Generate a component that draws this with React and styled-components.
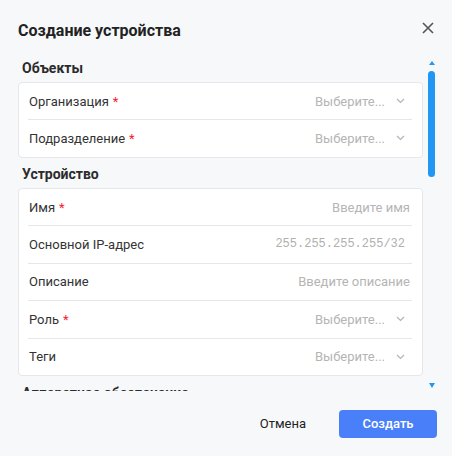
import styled, { createGlobalStyle } from "styled-components";

const GlobalStyle = createGlobalStyle`
  * {
    box-sizing: border-box;
  }
  body {
    margin: 0;
    background: #f7f8fa;
    font-family: Roboto, "Liberation Sans", Arial, sans-serif;
    color: #333;
  }
`;

const sections = [
  {
    title: "Объекты",
    rows: [
      { label: "Организация", required: true, kind: "select", hint: "Выберите..." },
      { label: "Подразделение", required: true, kind: "select", hint: "Выберите..." },
    ],
  },
  {
    title: "Устройство",
    rows: [
      { label: "Имя", required: true, kind: "input", hint: "Введите имя" },
      { label: "Основной IP-адрес", kind: "ip", hint: "255.255.255.255/32" },
      { label: "Описание", kind: "input", hint: "Введите описание" },
      { label: "Роль", required: true, kind: "select", hint: "Выберите..." },
      { label: "Теги", kind: "select", hint: "Выберите..." },
    ],
  },
  {
    title: "Аппаратное обеспечение",
    rows: [
      { label: "Производитель", kind: "select", hint: "Выберите..." },
      { label: "Модель", kind: "input", hint: "Введите модель" },
    ],
  },
];

function Chevron() {
  return (
    <svg width="9" height="6" viewBox="0 0 9 6" fill="none">
      <path d="M1 1l3.5 3.5L8 1" stroke="#b4b4b4" strokeWidth="1.2" />
    </svg>
  );
}

function CloseIcon() {
  return (
    <svg width="12" height="12" viewBox="0 0 12 12" fill="none">
      <path d="M1 1l10 10M11 1L1 11" stroke="#555" strokeWidth="1.6" />
    </svg>
  );
}

function FieldRow({ label, required, kind, hint }) {
  return (
    <Row>
      <Label>
        {label}
        {required && <Star>*</Star>}
      </Label>
      {kind === "select" && (
        <Select>
          <Placeholder>{hint}</Placeholder>
          <Chevron />
        </Select>
      )}
      {kind === "input" && <Placeholder>{hint}</Placeholder>}
      {kind === "ip" && <IpHint>{hint}</IpHint>}
    </Row>
  );
}

export default function App() {
  return (
    <>
      <GlobalStyle />
      <Modal>
        <Header>
          <Title>Создание устройства</Title>
          <CloseButton aria-label="Закрыть">
            <CloseIcon />
          </CloseButton>
        </Header>
        <Body>
          <Scroll>
            {sections.map((s) => (
              <Section key={s.title}>
                <SectionTitle>{s.title}</SectionTitle>
                <Card>
                  {s.rows.map((r) => (
                    <FieldRow key={r.label} {...r} />
                  ))}
                </Card>
              </Section>
            ))}
          </Scroll>
          <Track>
            <ArrowUp />
            <Thumb />
            <ArrowDown />
          </Track>
        </Body>
        <Footer>
          <CancelButton>Отмена</CancelButton>
          <PrimaryButton>Создать</PrimaryButton>
        </Footer>
      </Modal>
    </>
  );
}

const Modal = styled.div`
  width: 452px;
  height: 456px;
  display: flex;
  flex-direction: column;
  background: #f7f8fa;
`;

const Header = styled.header`
  height: 58px;
  padding: 4px 16px 0 18px;
  display: flex;
  align-items: center;
  justify-content: space-between;
`;

const Title = styled.h2`
  margin: 0;
  font-size: 16px;
  line-height: 22px;
  font-weight: 700;
  color: #222;
`;

const CloseButton = styled.button`
  width: 16px;
  height: 16px;
  margin-top: -6px;
  padding: 0;
  border: none;
  background: none;
  display: flex;
  align-items: center;
  justify-content: center;
  cursor: pointer;
`;

const Body = styled.div`
  height: 333px;
  padding: 0 17px 0 18px;
  display: flex;
  gap: 5px;
`;

const Scroll = styled.div`
  flex: 1;
  overflow: hidden;
`;

const Section = styled.section`
  & + & {
    margin-top: 6.5px;
  }
`;

const SectionTitle = styled.h3`
  margin: 0 0 4px;
  padding-left: 4px;
  font-size: 14px;
  line-height: 20px;
  font-weight: 700;
  color: #2b2b2b;
`;

const Card = styled.div`
  background: #fff;
  border: 1px solid #e5e7eb;
  border-radius: 4px;
`;

const Row = styled.div`
  height: 36px;
  padding: 0 12px 0 10px;
  display: flex;
  align-items: center;
  justify-content: space-between;
  font-size: 13px;

  & + & {
    box-shadow: inset 0 1px 0 0 #e5e7eb;
    margin: 0 10px 0 9px;
    padding: 1px 2px 0 1px;
    height: 37.5px;
  }
`;

const Label = styled.span`
  color: #333;
  white-space: nowrap;
`;

const Star = styled.span`
  color: #f5222d;
  margin-left: 4px;
`;

const Select = styled.span`
  display: flex;
  align-items: center;
  gap: 11px;
  margin-right: 5px;
`;

const Placeholder = styled.span`
  color: #b5b5b5;
  white-space: nowrap;
`;

const IpHint = styled.span`
  margin-right: 5px;
  font-family: "Liberation Mono", "DejaVu Sans Mono", monospace;
  font-size: 12px;
  color: #b0b0b0;
`;

const Track = styled.div`
  width: 7px;
  display: flex;
  flex-direction: column;
  align-items: center;
`;

const ArrowUp = styled.div`
  margin-top: 3px;
  border-left: 3.5px solid transparent;
  border-right: 3.5px solid transparent;
  border-bottom: 4.5px solid #2196f3;
`;

const Thumb = styled.div`
  margin-top: 6px;
  width: 7px;
  height: 106px;
  border-radius: 4px;
  background: #2196f3;
`;

const ArrowDown = styled.div`
  margin-top: auto;
  margin-bottom: 3px;
  border-left: 3.5px solid transparent;
  border-right: 3.5px solid transparent;
  border-top: 5px solid #2196f3;
`;

const Footer = styled.footer`
  flex: 1;
  padding: 0 15px 0 0;
  display: flex;
  align-items: center;
  justify-content: flex-end;
  gap: 17px;
`;

const CancelButton = styled.button`
  height: 28px;
  padding: 0 16px;
  border: none;
  background: none;
  font-family: inherit;
  font-size: 13px;
  color: #222;
  cursor: pointer;
`;

const PrimaryButton = styled.button`
  width: 98px;
  height: 28px;
  border: none;
  border-radius: 4px;
  background: #4a7ffa;
  font-family: inherit;
  font-size: 13px;
  font-weight: 500;
  color: #fff;
  cursor: pointer;
`;
